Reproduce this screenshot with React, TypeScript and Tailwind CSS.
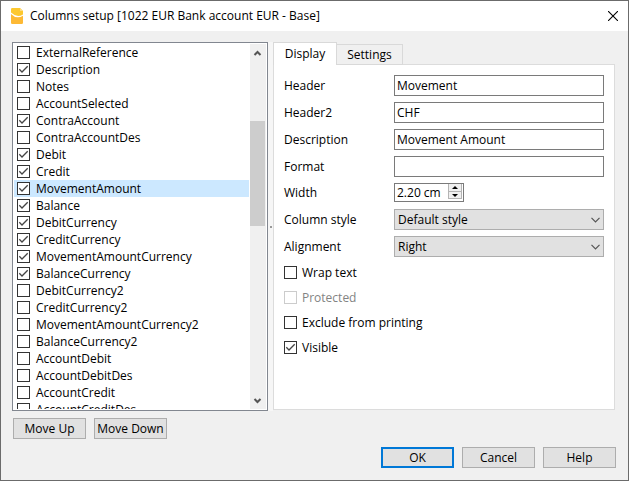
import React, { useState } from 'react';

interface Column {
  name: string;
  visible: boolean;
}

const COLUMNS: Column[] = [
  { name: 'ExternalReference', visible: false },
  { name: 'Description', visible: true },
  { name: 'Notes', visible: false },
  { name: 'AccountSelected', visible: false },
  { name: 'ContraAccount', visible: true },
  { name: 'ContraAccountDes', visible: false },
  { name: 'Debit', visible: true },
  { name: 'Credit', visible: true },
  { name: 'MovementAmount', visible: true },
  { name: 'Balance', visible: true },
  { name: 'DebitCurrency', visible: true },
  { name: 'CreditCurrency', visible: true },
  { name: 'MovementAmountCurrency', visible: true },
  { name: 'BalanceCurrency', visible: true },
  { name: 'DebitCurrency2', visible: false },
  { name: 'CreditCurrency2', visible: false },
  { name: 'MovementAmountCurrency2', visible: false },
  { name: 'BalanceCurrency2', visible: false },
  { name: 'AccountDebit', visible: false },
  { name: 'AccountDebitDes', visible: false },
  { name: 'AccountCredit', visible: false },
  { name: 'AccountCreditDes', visible: false },
];

const TEXT_FIELDS = [
  { id: 'header', label: 'Header', value: 'Movement' },
  { id: 'header2', label: 'Header2', value: 'CHF' },
  { id: 'description', label: 'Description', value: 'Movement Amount' },
  { id: 'format', label: 'Format', value: '' },
];

const SELECT_FIELDS = [
  { id: 'style', label: 'Column style', options: ['Default style', 'Bold', 'Italic'] },
  { id: 'alignment', label: 'Alignment', options: ['Right', 'Left', 'Center'] },
];

const FLAGS = [
  { label: 'Wrap text', checked: false, disabled: false },
  { label: 'Protected', checked: false, disabled: true },
  { label: 'Exclude from printing', checked: false, disabled: false },
  { label: 'Visible', checked: true, disabled: false },
];

interface CheckboxProps {
  label: string;
  checked: boolean;
  disabled?: boolean;
  className: string;
}

const Checkbox: React.FC<CheckboxProps> = ({ label, checked, disabled, className }) => (
  <label className={`flex items-center whitespace-nowrap ${disabled ? 'text-[#838383]' : ''} ${className}`}>
    <span className="grid shrink-0">
      <input
        type="checkbox"
        defaultChecked={checked}
        disabled={disabled}
        className="peer col-start-1 row-start-1 size-[13px] appearance-none border border-[#333] bg-white disabled:border-[#ccc]"
      />
      <svg
        viewBox="0 0 13 13"
        className="pointer-events-none invisible col-start-1 row-start-1 size-[13px] peer-checked:visible"
      >
        <path d="M2.3 6.3 5 9 10.7 3.3" fill="none" stroke="#444" strokeWidth="1.3" />
      </svg>
    </span>
    {label}
  </label>
);

interface PushButtonProps {
  children: React.ReactNode;
  primary?: boolean;
}

const PushButton: React.FC<PushButtonProps> = ({ children, primary }) => (
  <button
    type="button"
    className={`flex h-[21px] w-[73px] items-center justify-center whitespace-nowrap bg-[#e1e1e1] ${
      primary ? 'border-2 border-[#0078d7]' : 'border border-[#adadad]'
    }`}
  >
    {children}
  </button>
);

const Logo = () => (
  <svg viewBox="0 0 12 16" className="h-4 w-3">
    <path d="M0 1.2Q0 0 1.2 0H9L12 3V6.4Q6 10.2 0 4.6Z" fill="#fdc82f" />
    <path d="M0 6Q5.5 11.6 12 7.8V14.8Q12 16 10.8 16H1.2Q0 16 0 14.8Z" fill="#fdb935" />
    <path d="M9 0 12 3H9Z" fill="#fddc80" />
  </svg>
);

const ScrollBar = () => (
  <div className="flex w-4 shrink-0 flex-col items-center bg-[#f0f0f0] pr-px">
    <svg viewBox="0 0 15 17" className="h-[17px] w-[15px]">
      <path d="M4.5 11 7.5 8 10.5 11" fill="none" stroke="#555" strokeWidth="2" />
    </svg>
    <div className="flex w-full flex-1 flex-col">
      <div className="flex-[60]" />
      <div className="flex-[105] bg-[#cdcdcd]" />
      <div className="flex-[166]" />
    </div>
    <svg viewBox="0 0 15 17" className="h-[17px] w-[15px]">
      <path d="M4.5 7 7.5 10 10.5 7" fill="none" stroke="#555" strokeWidth="2" />
    </svg>
  </div>
);

const WidthField = () => {
  const [width, setWidth] = useState(2.2);

  return (
    <div className="flex h-[19px] w-[70px] self-start border border-[#7a7a7a] bg-white">
      <input
        id="width"
        value={`${width.toFixed(2)} cm`}
        readOnly
        className="min-w-0 flex-1 pl-0.5 outline-none"
      />
      <div className="flex w-[15px] shrink-0 flex-col pr-px pb-0.5">
        <button
          type="button"
          aria-label="Increase width"
          onClick={() => setWidth(width + 0.1)}
          className="flex h-2 items-center justify-center border border-t-0 border-[#b4b4b4] bg-[#f0f0f0]"
        >
          <svg viewBox="0 0 6 3" className="h-[3px] w-1.5">
            <path d="M0 3 3 0 6 3Z" />
          </svg>
        </button>
        <button
          type="button"
          aria-label="Decrease width"
          onClick={() => setWidth(Math.max(0, width - 0.1))}
          className="flex h-[7px] items-center justify-center border border-t-0 border-[#b4b4b4] bg-[#f0f0f0]"
        >
          <svg viewBox="0 0 6 3" className="h-[3px] w-1.5">
            <path d="M0 0H6L3 3Z" />
          </svg>
        </button>
      </div>
    </div>
  );
};

const DisplayForm = () => (
  <form className="px-2.5 pt-2.5">
    <div className="grid grid-cols-[110px_minmax(0,1fr)] items-center gap-y-1.5">
      {TEXT_FIELDS.map((field) => (
        <React.Fragment key={field.id}>
          <label htmlFor={field.id}>{field.label}</label>
          <input
            id={field.id}
            type="text"
            defaultValue={field.value}
            className="h-[21px] w-full border border-[#7a7a7a] bg-white px-0.5 outline-none"
          />
        </React.Fragment>
      ))}

      <label htmlFor="width" className="leading-5">Width</label>
      <WidthField />

      {SELECT_FIELDS.map((field) => (
        <React.Fragment key={field.id}>
          <label htmlFor={field.id}>{field.label}</label>
          <div className="grid items-center">
            <select
              id={field.id}
              className="col-start-1 row-start-1 h-[21px] w-full appearance-none border border-[#adadad] bg-[#e1e1e1] px-[3px] outline-none"
            >
              {field.options.map((option) => (
                <option key={option}>{option}</option>
              ))}
            </select>
            <svg
              viewBox="0 0 9 6"
              className="pointer-events-none col-start-1 row-start-1 mr-1 h-1.5 w-[9px] justify-self-end"
            >
              <path d="M.5 .8 4.5 4.8 8.5 .8" fill="none" stroke="#555" strokeWidth="1.2" />
            </svg>
          </div>
        </React.Fragment>
      ))}
    </div>

    <div className="mt-[7px] flex flex-col items-start gap-2">
      {FLAGS.map((flag) => (
        <Checkbox key={flag.label} {...flag} className="h-[17px] gap-[5px]" />
      ))}
    </div>
  </form>
);

export default function App() {
  const [selected, setSelected] = useState('MovementAmount');

  return (
    <div className="flex h-screen w-full flex-col border border-[#6b6b6b] bg-[#f0f0f0] font-['Open_Sans','Noto_Sans',sans-serif] text-[12px] leading-4 text-black">
      {/* Title bar */}
      <header className="flex h-[30px] shrink-0 items-center bg-white px-2.5">
        <Logo />
        <h1 className="ml-[7px] flex-1 truncate">Columns setup [1022 EUR Bank account EUR - Base]</h1>
        <button type="button" aria-label="Close">
          <svg viewBox="0 0 10 10" className="size-2.5">
            <path d="M0 0 10 10M10 0 0 10" stroke="#000" strokeWidth="1.1" />
          </svg>
        </button>
      </header>

      <main className="flex min-h-0 flex-1 pt-[11px] pr-[13px] pl-[11px]">
        {/* Column list */}
        <div className="flex w-64 shrink-0 border border-[#828790] bg-white p-px">
          <ul className="min-w-0 flex-1 overflow-y-auto [scrollbar-width:none]">
            {COLUMNS.map((column) => (
              <li
                key={column.name}
                onClick={() => setSelected(column.name)}
                className={`mr-px pl-[3px] ${column.name === selected ? 'bg-[#cce8ff]' : ''}`}
              >
                <Checkbox label={column.name} checked={column.visible} className="h-[17px] gap-1.5" />
              </li>
            ))}
          </ul>
          <ScrollBar />
        </div>

        {/* Splitter */}
        <div className="flex w-[5px] shrink-0 items-center justify-center bg-[#f6f6f6]">
          <div className="size-0.5 bg-[#999]" />
        </div>

        {/* Tabs */}
        <div className="flex min-w-0 flex-1 flex-col pb-px">
          <div role="tablist" className="z-10 -mb-px flex items-end">
            <button
              type="button"
              role="tab"
              aria-selected="true"
              className="h-[23px] w-16 border border-b-0 border-[#d9d9d9] bg-white"
            >
              Display
            </button>
            <button
              type="button"
              role="tab"
              aria-selected="false"
              className="h-[21px] w-[66px] border border-l-0 border-[#d9d9d9] bg-[#f0f0f0]"
            >
              Settings
            </button>
          </div>
          <div role="tabpanel" className="min-h-0 flex-1 border border-[#dcdcdc] bg-white">
            <DisplayForm />
          </div>
        </div>
      </main>

      <div className="mt-[7px] flex shrink-0 gap-2 px-3">
        <PushButton>Move Up</PushButton>
        <PushButton>Move Down</PushButton>
      </div>

      <footer className="mt-2 flex shrink-0 justify-end gap-2 px-3 pb-3">
        <PushButton primary>OK</PushButton>
        <PushButton>Cancel</PushButton>
        <PushButton>Help</PushButton>
      </footer>
    </div>
  );
}
